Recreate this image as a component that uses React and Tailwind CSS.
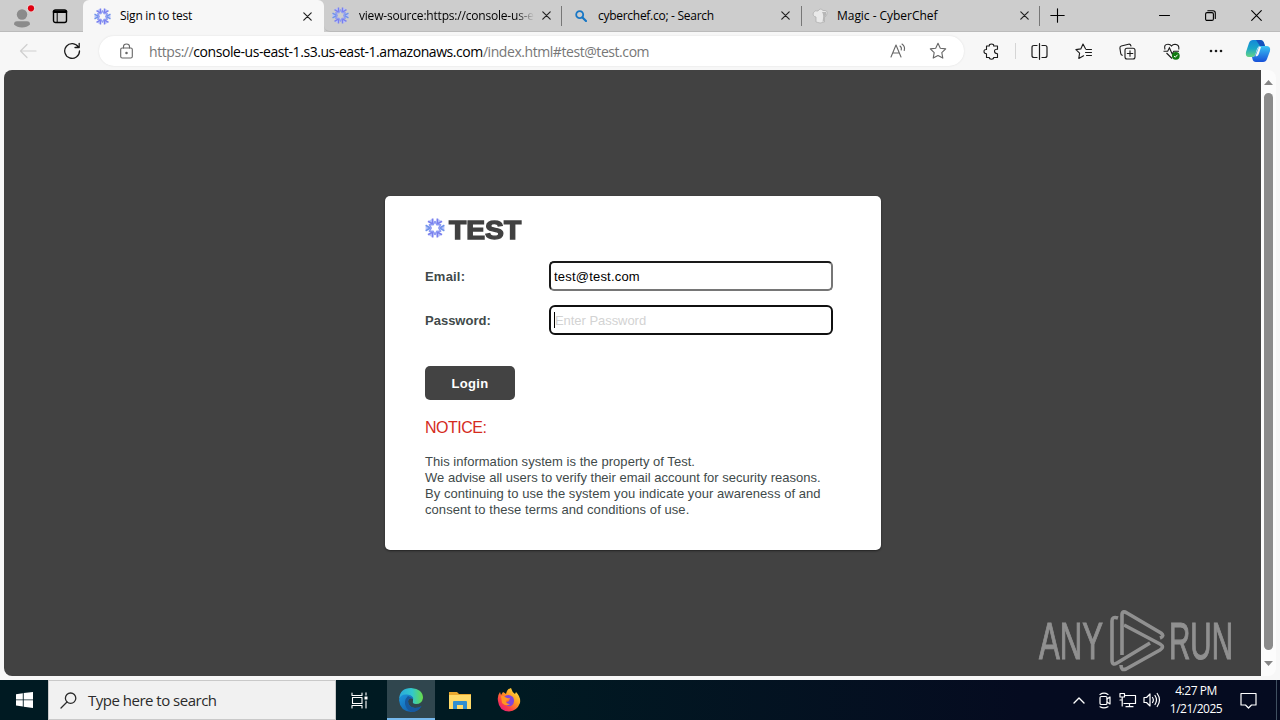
import React from 'react';

const UI = "font-['Open_Sans','Noto_Sans',sans-serif]";

function Icon({ w = 20, h = 20, className = '', children, sw = 1.1 }) {
  return (
    <svg width={w} height={h} viewBox={`0 0 ${w} ${h}`} fill="none" stroke="currentColor" strokeWidth={sw} strokeLinecap="round" strokeLinejoin="round" className={`block shrink-0 ${className}`}>
      {children}
    </svg>
  );
}

function Burst({ size = 16 }) {
  return (
    <svg width={size} height={size} viewBox="0 0 20 20" className="block shrink-0">
      {[30, 90, 150, 210, 270, 330].map((a) => (
        <g key={a} transform={`rotate(${a} 10 10)`}>
          <path d="M8.2 .6H11.8L10.8 5H9.2Z" fill="#b9c3fb" />
          <path d="M7.3 .6L9.9 5.4M12.7 .6L10.1 5.4" fill="none" stroke={a % 180 === 90 ? '#6f93ea' : '#7a80ee'} strokeWidth="1.7" />
          <path d="M6.3 4.2L10 6.2L13.7 4.2" fill="none" stroke="#8d9af3" strokeWidth="1.5" />
        </g>
      ))}
    </svg>
  );
}

function Close({ className = '' }) {
  return <Icon w={9} h={9} sw={1.2} className={`text-[#222] ${className}`}><path d="M.8.8L8.2 8.2M8.2.8L.8 8.2" /></Icon>;
}

function TabBar() {
  return (
    <div className={`flex h-8 bg-[#cdcdcd] text-[12px] text-black ${UI}`}>
      <div className="flex w-[83px] items-center border-b border-[#bbb] pl-3">
        <svg width="24" height="24" viewBox="0 0 24 24" className="block">
          <circle cx="10" cy="10.5" r="5.2" fill="#8b8b8b" />
          <path d="M2 20.5Q2 17.3 5 17.3H15Q18 17.3 18 20.5Q15 23.5 10 23.5T2 20.5Z" fill="#8b8b8b" />
          <circle cx="19" cy="4.3" r="4" fill="#e6d6d6" />
          <circle cx="19" cy="4.3" r="3.1" fill="#e00010" />
        </svg>
        <Icon w={16} h={16} sw={1.4} className="ml-4 text-black"><rect x="1.5" y="2" width="13" height="12.5" rx="2" /><path d="M2 3.7H14" strokeWidth="2.6" /><path d="M5.2 4V14" strokeWidth="1" /></Icon>
      </div>
      <div className="flex w-[241px] items-center rounded-t-md bg-[#f7f7f7] pl-[11px]">
        <Burst size={17} />
        <span className="ml-[9px] w-[183px] whitespace-nowrap tracking-[-0.25px]">Sign in to test</span>
        <Close />
      </div>
      <div className="flex w-[237px] items-center rounded-bl-md border-b border-[#bbb] pl-2">
        <Burst size={17} />
        <span className="ml-[10px] w-[175px] whitespace-nowrap tracking-[-0.2px] [mask-image:linear-gradient(to_right,black_157px,transparent_175px)]">view-source:https://console-us-e</span>
        <Close className="ml-[8px]" />
      </div>
      <div className="flex w-[240px] items-center border-b border-[#bbb]">
        <div className="h-[20px] w-px bg-[#777]" />
        <Icon w={12} h={12} sw={1.8} className="ml-[13px] text-[#1877c5]"><circle cx="4.7" cy="4.7" r="3.5" /><path d="M7.5 7.5L11 11" strokeWidth="2.2" /></Icon>
        <span className="ml-[11px] w-[183px] whitespace-nowrap tracking-[-0.28px]">cyberchef.co; - Search</span>
        <Close />
      </div>
      <div className="flex w-[238px] items-center border-b border-[#bbb]">
        <div className="h-[20px] w-px bg-[#777]" />
        <svg width="16" height="16" viewBox="0 0 16 16" className="ml-[10px] block">
          <path d="M4 9Q0 8 1.5 4.5Q3 2 6 3Q8-.5 11 2.5Q16 2 15 6Q14 9 12.5 9V14Q8 16 4 14Z" fill="#e9e9e9" stroke="#aaa" strokeWidth=".7" />
          <path d="M10 4Q12 6 10.5 14L12.5 13V9Q15 7 14 4Z" fill="#b7b7b7" />
        </svg>
        <span className="ml-[9px] w-[183px] whitespace-nowrap tracking-[-0.04px]">Magic - CyberChef</span>
        <Close />
      </div>
      <div className="flex flex-1 items-center border-b border-[#bbb]">
        <div className="h-[20px] w-px bg-[#777]" />
        <Icon w={15} h={15} className="ml-[10px] text-black"><path d="M7.5.8V14.2M.8 7.5H14.2" /></Icon>
        <Icon w={11} h={11} className="ml-[94px] text-black"><path d="M.5 5.5H10.5" /></Icon>
        <Icon w={11} h={11} className="ml-[35px] text-black"><rect x=".6" y="2.6" width="7.8" height="7.8" rx="1.4" /><path d="M2.8.7H8Q10.3.7 10.3 3V8.4" /></Icon>
        <Icon w={11} h={11} className="ml-[35px] text-black"><path d="M.7.7L10.3 10.3M10.3.7L.7 10.3" /></Icon>
      </div>
    </div>
  );
}

function Toolbar() {
  return (
    <div className={`flex h-[38px] items-center bg-[#f7f7f7] text-[#1b1b1b] ${UI}`}>
      <Icon w={18} h={16} sw={1.2} className="ml-[19px] text-[#cfcfcf]"><path d="M17 8H1.5M8 1.5L1.5 8L8 14.5" /></Icon>
      <Icon w={18} h={18} sw={1.3} className="ml-[26px]"><path d="M15.5 5.3A7.4 7.4 0 1 0 16.5 9M16.2 1.3V5.5H12" /></Icon>
      <div className="ml-[18px] flex h-[30px] w-[865px] items-center rounded-full bg-white shadow-[0_0_2px_#ddd]">
        <Icon w={13} h={16} className="ml-[21px] text-[#666]"><rect x=".7" y="5" width="11.6" height="10" rx="1.5" /><path d="M3.5 5V3.5Q3.5 1 6.5 1T9.5 3.5V5" /><circle cx="6.5" cy="10" r=".7" fill="currentColor" /></Icon>
        <span className="ml-4 w-[740px] whitespace-nowrap text-[14px] tracking-[-0.435px] text-[#777]">https://<span className="text-black">console-us-east-1.s3.us-east-1.amazonaws.com</span>/index.html#test@test.com</span>
        <Icon w={17} h={16} className="ml-px text-[#666]"><path d="M1 14L6 2L11 14M2.7 10H9.3M10 3Q12 4.5 11.2 7M12 1Q15.5 3.5 14.2 7.5" /></Icon>
        <Icon w={18} h={18} className="ml-[22px] text-[#666]"><path d="M9 1.3L11.3 6.2L16.7 6.9L12.8 10.7L13.8 16.1L9 13.5L4.2 16.1L5.2 10.7L1.3 6.9L6.7 6.2Z" /></Icon>
      </div>
      <Icon w={17} h={17} sw={1.1} className="ml-[19px]"><path d="M3.5 3H6.3Q6 1 8.5 1T10.7 3H14.5V6.3Q11.5 6 11.5 8.3T14.5 10.7V14.5H10.7Q10.7 16.2 8.5 16.2T6.3 14.5H3.5V10.8Q1 10.7 1 8.5T3.5 6.5Z" /></Icon>
      <div className="ml-[15px] h-4 w-px bg-[#d5d5d5]" />
      <Icon w={17} h={17} sw={1.2} className="ml-[15px]"><path d="M6 2.5H3Q1 2.5 1 4.5V12.5Q1 14.5 3 14.5H6M11 2.5H14Q16 2.5 16 4.5V12.5Q16 14.5 14 14.5H11M8.5.7V16.3" /></Icon>
      <Icon w={18} h={17} sw={1.1} className="ml-[27px]"><path d="M10.5 5.8L8 1L5.8 5.9L.9 6.6L4.6 10.1L3.8 15.4L8.6 12.8M11.2 6.5H16.5M10.5 9.5H16.5M11.5 12.5H16.5" /></Icon>
      <Icon w={17} h={17} sw={1.1} className="ml-[26px]"><rect x="6" y="5.2" width="10" height="10.8" rx="2" /><path d="M11 7.8V13.3M8.3 10.5H13.8M3.4 12.2Q2 12 1.7 10.3L.9 5.2Q.7 3.5 2.3 3L9.5 1.2Q11.4.8 12 3" /></Icon>
      <svg width="18" height="17" viewBox="0 0 18 17" fill="none" stroke="currentColor" strokeWidth="1.1" className="ml-[27px] block shrink-0">
        <path d="M2 6.5Q.5 1.2 5 1.2Q7.5 1.2 8.5 3Q9.7 1.2 12 1.2Q16.5 1.5 15.8 6.5M.5 8.2H4.7L6.4 4.8L9.2 11L10.8 8.2H16M3.5 10L9 15.5" />
        <circle cx="12.8" cy="12.8" r="3.9" fill="#127a12" stroke="none" /><path d="M11 13L12.3 14.2L14.6 11.7" stroke="#fff" strokeWidth="1" />
      </svg>
      <Icon w={14} h={4} className="ml-[28px]"><g fill="currentColor" stroke="none"><circle cx="2" cy="2" r="1.3" /><circle cx="7" cy="2" r="1.3" /><circle cx="12" cy="2" r="1.3" /></g></Icon>
      <svg width="26" height="24" viewBox="0 0 26 24" className="ml-[22px] block shrink-0">
        <defs>
          <linearGradient id="cpa" x1="0" y1="0" x2="0" y2="1"><stop stopColor="#1488d8" /><stop offset=".5" stopColor="#1ba7c8" /><stop offset="1" stopColor="#66d484" /></linearGradient>
          <linearGradient id="cpb" x1="0" y1="0" x2="0" y2="1"><stop stopColor="#39c4f4" /><stop offset="1" stopColor="#1750d8" /></linearGradient>
        </defs>
        <path d="M8 1H15Q18 1 19 4L20 7H15Q13 7 12 10L10.5 15Q10 18 7 18H4Q0 18 1 13L4 4Q5 1 8 1Z" fill="url(#cpa)" />
        <path d="M18 23H11Q8 23 7.5 20L7 18Q10 18 10.7 15L13 9Q14 7 16 7H21Q26 7 25 12L22 20Q21 23 18 23Z" fill="url(#cpb)" />
        <path d="M11 1H15Q18 1 19 4L20 7H15Z" fill="#1551bd" />
        <path d="M14 8L10.5 17.2H11.8Q13.2 17 13.8 15L16 8Z" fill="#f7f7f7" />
      </svg>
    </div>
  );
}

function Watermark() {
  return (
    <svg width="204" height="66" viewBox="0 0 204 66" className="absolute bottom-0 left-[1034px] opacity-60">
      <g fill="#c4c4c4" stroke="#c4c4c4" strokeWidth="1.1" fontFamily="Liberation Sans Narrow, Liberation Sans, sans-serif" fontSize="51">
        <text x="1" y="49" textLength="64" lengthAdjust="spacingAndGlyphs">ANY</text>
        <text x="131" y="49" textLength="64" lengthAdjust="spacingAndGlyphs">RUN</text>
      </g>
      <g fill="none" stroke="#c4c4c4" strokeWidth="3.6" strokeLinejoin="round">
        <path d="M80 8Q74 6 74 11V50Q74 56 79 53L112 33" />
        <path d="M84 45V5Q84 0 89 3L123 23Q127 26 122 28" />
        <path d="M86 15L122 34Q127 37 122 40L88 59Q83 61 83 55" />
      </g>
    </svg>
  );
}

function LoginCard() {
  return (
    <div className="mt-[126px] ml-[381px] h-[354px] w-[496px] rounded-[5px] bg-white pt-[22px] pl-[40px] font-['Liberation_Sans',sans-serif] text-[13px] text-[#414a4a] shadow-[0_1px_2px_#222]">
      <div className="flex h-6 items-center">
        <div className="-mt-1"><Burst size={20} /></div>
        <span className="ml-1 origin-left scale-x-[1.13] text-[25px] leading-6 font-bold text-[#414141] [-webkit-text-stroke:1.3px_#414141]">TEST</span>
      </div>
      <div className="mt-[19px] flex h-[30px] items-center">
        <label className="w-[124px] pt-0.5 font-bold tracking-[0.2px]">Email:</label>
        <input className="h-[30px] w-[284px] rounded-[5px] border-2 border-t-[#1a1a1a] border-r-[#767676] border-b-[#767676] border-l-[#1a1a1a] bg-white pl-[3px] tracking-[0.2px] text-black" defaultValue="test@test.com" />
      </div>
      <div className="mt-[14px] flex h-[30px] items-center">
        <label className="w-[124px] pt-0.5 font-bold tracking-[0px]">Password:</label>
        <div className="flex h-[30px] w-[284px] items-center rounded-[6px] border-2 border-[#101010] bg-white pl-[3px] tracking-[-0.05px] text-[#d3d3d3]">
          <span className="h-4 w-px bg-black" /><span className="pt-0.5">Enter Password</span>
        </div>
      </div>
      <button className="mt-[31px] block h-[34px] w-[90px] rounded-[5px] bg-[#434343] pt-0.5 font-bold tracking-[0.3px] text-white">Login</button>
      <div className="mt-[18px] text-[16px] leading-5 tracking-[-0.5px] text-[#d52b1e]">NOTICE:</div>
      <p className="mt-[16px] leading-4 whitespace-nowrap tracking-[0.03px]">
        This information system is the property of Test.<br /><span className="tracking-[0.01px]">We advise all users to verify their email account for security reasons.</span><br /><span className="tracking-[0.06px]">By continuing to use the system you indicate your awareness of and<br />consent to these terms and conditions of use.</span>
      </p>
    </div>
  );
}

function Content() {
  return (
    <div className="flex h-[610px] bg-[#f7f7f7] pl-1">
      <div className="relative h-[606px] w-[1257px] overflow-hidden rounded-l-[8px] bg-[#424242]">
        <LoginCard />
        <Watermark />
      </div>
      <div className="flex h-[606px] w-[15px] flex-col items-center rounded-r-[8px] bg-[#fcfcfc] pt-[10px]">
        <svg width="9" height="5" className="block"><path d="M4.5 0L9 5H0Z" fill="#858585" /></svg>
        <div className="mt-[8px] h-[557px] w-[9px] rounded-full bg-[#8b8b8b]" />
        <svg width="9" height="5" className="mt-[11px] block"><path d="M4.5 5L9 0H0Z" fill="#858585" /></svg>
      </div>
    </div>
  );
}

function Taskbar() {
  return (
    <div className={`flex h-10 items-center bg-linear-to-r from-[#001a22] from-40% to-[#050b20] to-80% text-white ${UI}`}>
      <div className="flex w-12 shrink-0 justify-center">
        <svg width="17" height="16" viewBox="0 0 17 16" fill="#fff" className="block"><path d="M0 2.3L6.8 1.3V7.4H0ZM7.7 1.1L17 0V7.4H7.7ZM0 8.3H6.8V14.6L0 13.6ZM7.7 8.3H17V16L7.7 14.8Z" /></svg>
      </div>
      <div className="flex h-10 w-[288px] shrink-0 items-center border border-[#c9c9c9] bg-[#f1f1f1] pl-[11px] text-[#2b2b2b]">
        <Icon w={17} h={17} sw={1.3}><circle cx="10.6" cy="6.2" r="5.2" /><path d="M7 10L1 16" /></Icon>
        <span className="ml-[11px] text-[15px] whitespace-nowrap tracking-[-0.5px]">Type here to search</span>
      </div>
      <div className="flex w-[51px] shrink-0 justify-center pr-1">
        <Icon w={17} h={17} sw={1.1}><path d="M1 1V3.5H11V1M1 16V13.5H11V16M1.5 5.5H11V11.5H1.5ZM15 .7V3M15 9V16" /><path d="M13.5 4.5H16.5V7.5H13.5Z" fill="#fff" stroke="none" /></Icon>
      </div>
      <div className="flex h-10 w-12 shrink-0 items-center justify-center border-b-2 border-[#76b9ed] bg-[#30464e]">
        <svg width="24" height="24" viewBox="0 0 24 24" className="mt-0.5 block">
          <defs>
            <linearGradient id="ea" x1="0" x2="1"><stop stopColor="#2aa8dc" /><stop offset=".55" stopColor="#32c8cc" /><stop offset="1" stopColor="#68dc48" /></linearGradient>
            <linearGradient id="eb" x1="0" y1="0" x2="1" y2="1"><stop stopColor="#1c95dc" /><stop offset="1" stopColor="#1050a0" /></linearGradient>
          </defs>
          <path d="M0 11Q1 0 12 0Q24 1 24 10Q23 16 17 16Q13 16 14 13Q15 8 9 7Q3 7 0 11Z" fill="url(#ea)" />
          <path d="M0 12Q1 6 8 6.5Q14 7 14.3 11Q10 9 9 13Q9 19 16 20Q20 20 22.5 18Q19 24 12 24Q1 23 0 12Z" fill="url(#eb)" />
          <path d="M9 8Q4 13 7 19Q9 23 14 24Q20 23 22.5 18Q20 20 16 20Q9 19 9 13Q10 10 13 10Z" fill="#17599f" />
        </svg>
      </div>
      <div className="flex w-[49px] shrink-0 justify-center">
        <svg width="22" height="19" viewBox="0 0 22 19" className="block">
          <path d="M0 1H8L10 3H22V17H0Z" fill="#e9a82e" /><path d="M0 4H22V18H0Z" fill="#ffda69" />
          <path d="M4 18V11Q4 10 5 10H17Q18 10 18 11V18H14V14H8V18Z" fill="#318fd0" />
        </svg>
      </div>
      <div className="flex w-[49px] shrink-0 justify-center">
        <svg width="24" height="24" viewBox="0 0 24 24" className="block">
          <defs><linearGradient id="ff" x1="1" y1="0" x2=".15" y2="1"><stop stopColor="#fff44f" /><stop offset=".45" stopColor="#ff9a1f" /><stop offset=".75" stopColor="#fb3f47" /><stop offset="1" stopColor="#e31587" /></linearGradient></defs>
          <path d="M3 4L4 7L6 4Q8 5 9 6Q10 1 14 0Q15 4 18 6L19 4Q24 9 23 15Q20 23 12 23.5Q2 23 1 13Q0 8 3 4Z" fill="url(#ff)" />
          <path d="M7 9Q11 5 16 9Q19 15 14 18Q9 19 7.5 14Q9 15 12 13L13 10Q9 11 7 9Z" fill="#8045d8" />
          <path d="M4 8Q6 7 8 9L12 11L9 13Q9 16 13 16Q9 19 5 15Z" fill="#ff9624" />
        </svg>
      </div>
      <Icon w={12} h={8} sw={1.4} className="ml-[540px]"><path d="M1 7L6 2L11 7" /></Icon>
      <Icon w={14} h={17} sw={1.2} className="ml-[13px]"><rect x="2" y="4.5" width="7" height="8" rx="1.3" /><path d="M9 7L12 5V12L9 10M2 2.4Q6 0 10 2.4M2 14.8Q6 17 10 14.8" /></Icon>
      <Icon w={18} h={16} sw={1.2} className="ml-[7px]"><path d="M6.5 3.5H16.5V11.5H5M10.5 11.5V14.5M7 14.7H14M1 1.5H5.5V5H1ZM3.2 5V14M1 8H3" /></Icon>
      <Icon w={18} h={16} sw={1.2} className="ml-[6px]"><path d="M1 5.5H3.5L7 2V14L3.5 10.5H1ZM9.5 5.5Q11.2 8 9.5 10.5M12 3.5Q15 8 12 12.5M14.2 1.5Q18.8 8 14.2 14.5" /></Icon>
      <div className="ml-[4px] flex w-[62px] shrink-0 flex-col items-center text-[12px] leading-[18px] whitespace-nowrap">
        <span className="tracking-[-0.45px]">4:27 PM</span><span className="tracking-[-0.5px]">1/21/2025</span>
      </div>
      <Icon w={17} h={17} sw={1.2} className="ml-[13px]"><path d="M1 1.5H16V13H11.5L8.5 16L5.5 13H1Z" /></Icon>
      <div className="ml-[19px] h-10 w-px bg-[#405060]" />
    </div>
  );
}

export default function App() {
  return (
    <div className="h-[720px] w-[1280px] overflow-hidden bg-[#f7f7f7]">
      <TabBar />
      <Toolbar />
      <Content />
      <Taskbar />
    </div>
  );
}
